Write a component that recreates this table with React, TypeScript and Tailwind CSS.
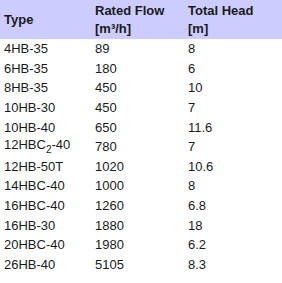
import React from "react";

const rows: [React.ReactNode, string, string][] = [
  ["4HB-35", "89", "8"],
  ["6HB-35", "180", "6"],
  ["8HB-35", "450", "10"],
  ["10HB-30", "450", "7"],
  ["10HB-40", "650", "11.6"],
  [<span className="relative top-[-2px]">12HBC<sub className="text-[10px] relative top-[4px] align-baseline">2</sub>-40</span>, "780", "7"],
  ["12HB-50T", "1020", "10.6"],
  ["14HBC-40", "1000", "8"],
  ["16HBC-40", "1260", "6.8"],
  ["16HB-30", "1880", "18"],
  ["20HBC-40", "1980", "6.2"],
  ["26HB-40", "5105", "8.3"],
];

export default function App() {
  return (
    <div className="w-[282px] h-[283px] bg-white overflow-hidden text-[13px] text-[#1a1a1a]" style={{ fontFamily: '"Liberation Sans", Arial, sans-serif' }}>
      <table className="w-full border-collapse table-fixed">
        <colgroup>
          <col className="w-[91px]" />
          <col className="w-[93px]" />
          <col />
        </colgroup>
        <thead>
          <tr className="bg-[#ccccff] h-[39px] font-bold text-left align-middle">
            <th className="pl-[4px] leading-[18px]">Type</th>
            <th className="pl-[4px] leading-[18px]">Rated Flow<br />[m³/h]</th>
            <th className="pl-[4px] leading-[18px]">Total Head<br />[m]</th>
          </tr>
        </thead>
        <tbody>
          {rows.map((r, i) => (
            <tr key={i} className="h-[19.6px] align-middle">
              <td className="pl-[4px] leading-[15px] whitespace-nowrap">{r[0]}</td>
              <td className="pl-[4px] leading-[15px]">{r[1]}</td>
              <td className="pl-[4px] leading-[15px]">{r[2]}</td>
            </tr>
          ))}
        </tbody>
      </table>
    </div>
  );
}
